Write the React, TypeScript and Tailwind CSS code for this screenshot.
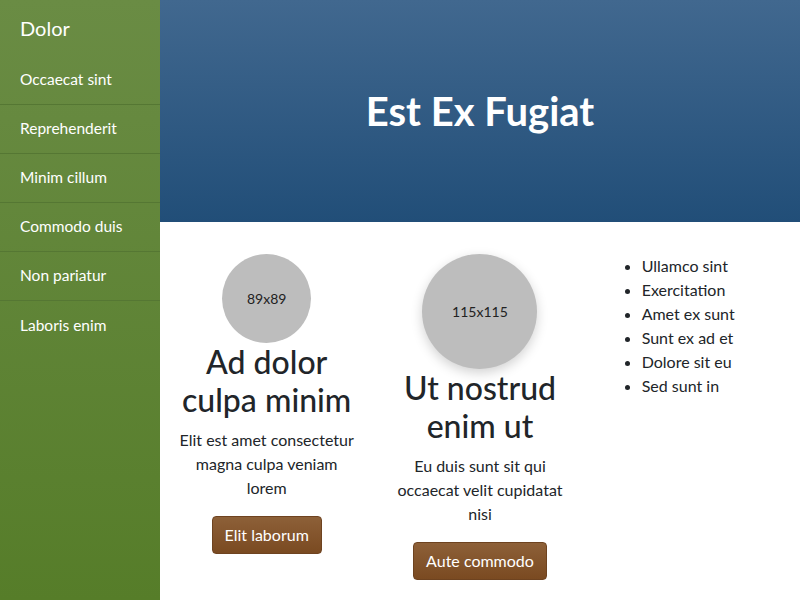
import React from "react";

const navItems = [
  "Occaecat sint",
  "Reprehenderit",
  "Minim cillum",
  "Commodo duis",
  "Non pariatur",
  "Laboris enim",
];

const listItems = [
  "Ullamco sint",
  "Exercitation",
  "Amet ex sunt",
  "Sunt ex ad et",
  "Dolore sit eu",
  "Sed sunt in",
];

type FeatureProps = {
  size: number;
  title: string;
  text: string;
  action: string;
  shadow?: boolean;
};

function Feature({ size, title, text, action, shadow }: FeatureProps) {
  return (
    <div className="flex flex-col items-center px-[15px] text-center">
      <div
        className={
          "flex shrink-0 items-center justify-center rounded-full bg-[#bdbdbd] text-[14px] text-[#222] " +
          (shadow ? "shadow-[0_4px_12px_rgba(0,0,0,0.18)]" : "")
        }
        style={{ width: size, height: size }}
      >
        {size}x{size}
      </div>
      <h2 className="mb-2 text-[32px] leading-[1.2] font-medium text-[#212529]">{title}</h2>
      <p className="mb-4 text-[16px] leading-6 text-[#212529]">{text}</p>
      <button
        type="button"
        className="rounded-[4px] border border-[#6e4320] bg-gradient-to-b from-[#8d6038] to-[#7a4a21] px-3 py-[6px] text-[16px] leading-6 text-white"
      >
        {action}
      </button>
    </div>
  );
}

export default function App() {
  return (
    <div className="flex h-[600px] w-[800px] overflow-hidden bg-white font-['Lato',sans-serif]">
      <aside className="flex w-[160px] shrink-0 flex-col bg-gradient-to-b from-[#6a8c44] to-[#567d29] text-white">
        <div className="flex h-[56px] items-center px-5 text-[20px]">Dolor</div>
        <nav className="flex flex-col">
          {navItems.map((item, i) => (
            <a
              key={item}
              href="#"
              className={
                "flex h-[49px] items-center px-5 text-[15.5px] " +
                (i < navItems.length - 1 ? "border-b border-[#557733]" : "")
              }
            >
              {item}
            </a>
          ))}
        </nav>
      </aside>

      <main className="flex min-w-0 flex-1 flex-col">
        <header className="flex h-[222px] items-center justify-center bg-gradient-to-b from-[#41688f] to-[#214e78]">
          <h1 className="text-[40px] font-bold text-white">Est Ex Fugiat</h1>
        </header>

        <section className="grid grid-cols-3 pt-8">
          <Feature
            size={89}
            title="Ad dolor culpa minim"
            text="Elit est amet consectetur magna culpa veniam lorem"
            action="Elit laborum"
          />
          <Feature
            size={115}
            title="Ut nostrud enim ut"
            text="Eu duis sunt sit qui occaecat velit cupidatat nisi"
            action="Aute commodo"
            shadow
          />
          <div className="px-[15px]">
            <ul className="list-disc pl-10 text-[16px] leading-6 text-[#212529]">
              {listItems.map((item) => (
                <li key={item}>{item}</li>
              ))}
            </ul>
          </div>
        </section>
      </main>
    </div>
  );
}
